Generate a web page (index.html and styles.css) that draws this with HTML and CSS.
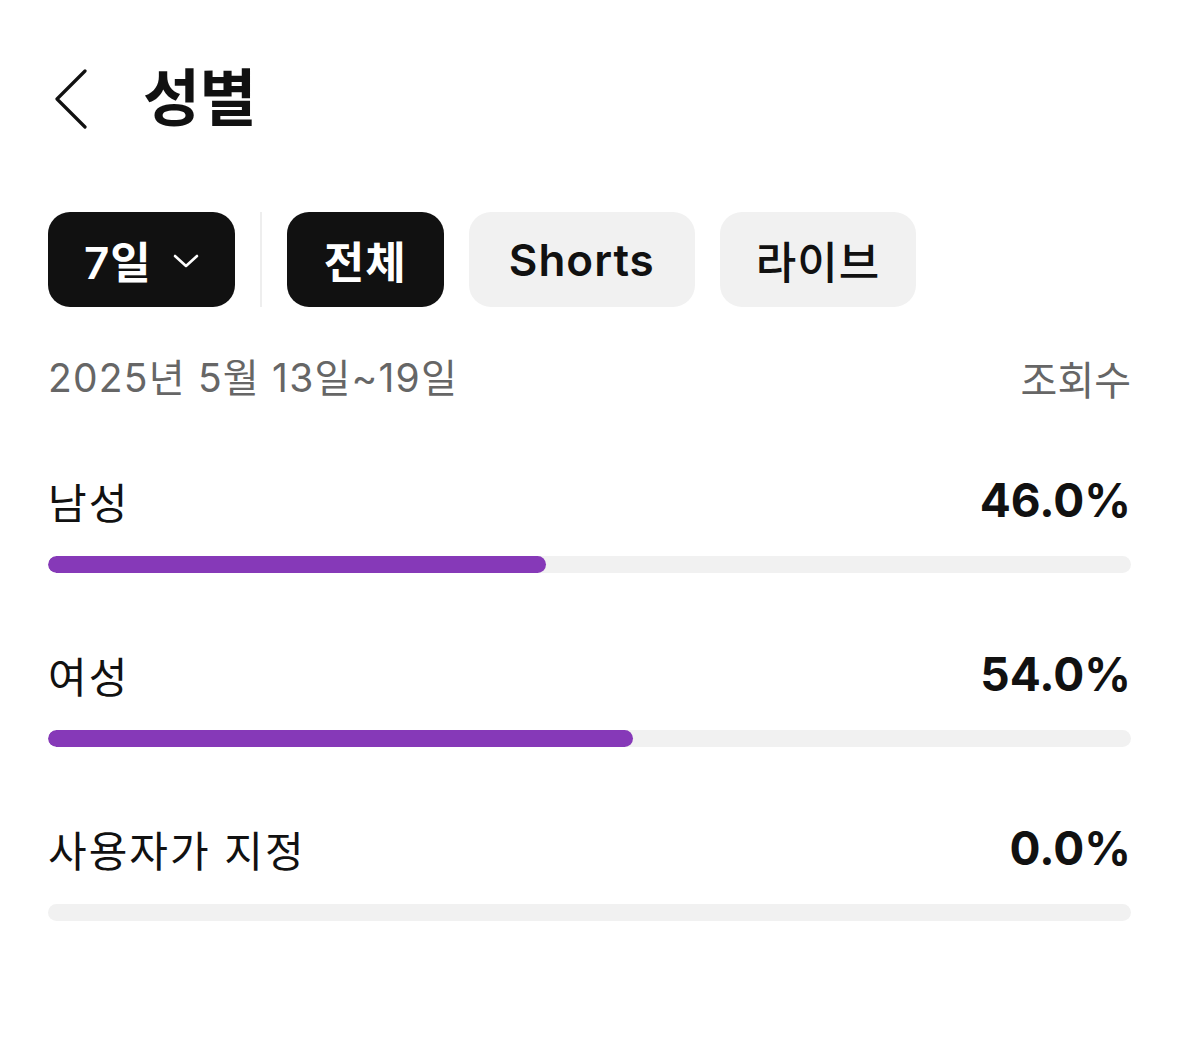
FILE: index.html
```html
<!DOCTYPE html>
<html lang="ko">
<head>
  <meta charset="UTF-8" />
  <meta name="viewport" content="width=device-width, initial-scale=1.0" />
  <title>성별</title>
  <link rel="stylesheet" href="styles.css">
</head>
<body>
  <div class="page">
    <div class="header">
      <svg class="back" width="34" height="60" viewBox="0 0 34 60">
        <path d="M31 2 L3 30 L31 58" fill="none" stroke="#111" stroke-width="3.2" stroke-linecap="round" stroke-linejoin="round"/>
      </svg>
      <h1>성별</h1>
    </div>

    <div class="chips">
      <div class="chip dark period">7일
        <svg class="caret" width="26" height="16" viewBox="0 0 26 16">
          <path d="M2 3 L13 13 L24 3" fill="none" stroke="#fff" stroke-width="2.6" stroke-linecap="round" stroke-linejoin="round"/>
        </svg>
      </div>
      <div class="divider"></div>
      <div class="chip dark">전체</div>
      <div class="chip wide">Shorts</div>
      <div class="chip light">라이브</div>
    </div>

    <div class="meta">
      <span class="date">2025년 5월 13일~19일</span>
      <span class="metric">조회수</span>
    </div>

    <div class="row">
      <div class="row-head">
        <span class="label">남성</span>
        <span class="value">46.0%</span>
      </div>
      <div class="track"><div class="fill" style="width: 46%"></div></div>
    </div>

    <div class="row">
      <div class="row-head">
        <span class="label">여성</span>
        <span class="value">54.0%</span>
      </div>
      <div class="track"><div class="fill" style="width: 54%"></div></div>
    </div>

    <div class="row">
      <div class="row-head">
        <span class="label">사용자가 지정</span>
        <span class="value">0.0%</span>
      </div>
      <div class="track"><div class="fill" style="width: 0%"></div></div>
    </div>
  </div>
</body>
</html>
```

FILE: styles.css
```css
:root {
  --ink: #111111;
  --muted: #666666;
  --chip-bg: #f1f1f1;
  --track: #f1f1f1;
  --purple: #8639b8;
}

* {
  box-sizing: border-box;
  margin: 0;
  padding: 0;
  font-family: Inter, 'Noto Sans CJK KR', sans-serif;
}

body {
  background-color: white;
  color: var(--ink);
}

.page {
  padding: 0 48px;
}

.header {
  display: flex;
  align-items: center;
  height: 80px;
  margin-top: 59px;
}

.back {
  margin-left: 6px;
}

h1 {
  font-size: 62px;
  font-weight: 700;
  line-height: 1;
  margin-left: 55px;
  letter-spacing: -0.5px;
}

.chips {
  display: flex;
  align-items: stretch;
  gap: 25px;
  margin-top: 73px;
  height: 95px;
}

.chip {
  display: flex;
  align-items: center;
  justify-content: center;
  gap: 21px;
  padding: 0 37px;
  border-radius: 22px;
  background-color: var(--chip-bg);
  font-size: 44px;
  font-weight: 600;
  letter-spacing: 1px;
}

.chip.dark {
  background-color: var(--ink);
  color: white;
}

.chip.period {
  padding: 0 36px;
}

.chip.wide {
  padding: 0 40px;
}

.chip.light {
  font-weight: 500;
  padding: 0 36px;
}

.caret {
  margin-top: 2px;
}

.divider {
  width: 2px;
  background-color: #eeeeee;
}

.meta {
  display: flex;
  justify-content: space-between;
  align-items: center;
  height: 50px;
  margin-top: 43px;
  color: var(--muted);
}

.date {
  font-size: 39px;
  letter-spacing: 1.2px;
}

.metric {
  font-size: 40px;
  margin-top: 6px;
}

.row {
  margin-top: 75px;
}

.row + .row {
  margin-top: 76px;
}

.row-head {
  display: flex;
  justify-content: space-between;
  align-items: center;
  height: 50px;
}

.label {
  font-size: 42px;
  letter-spacing: 2px;
}

.value {
  font-size: 46px;
  font-weight: 700;
}

.track {
  margin-top: 31px;
  height: 17px;
  border-radius: 9px;
  background-color: var(--track);
  overflow: hidden;
}

.fill {
  height: 100%;
  border-radius: 9px;
  background-color: var(--purple);
}
```
